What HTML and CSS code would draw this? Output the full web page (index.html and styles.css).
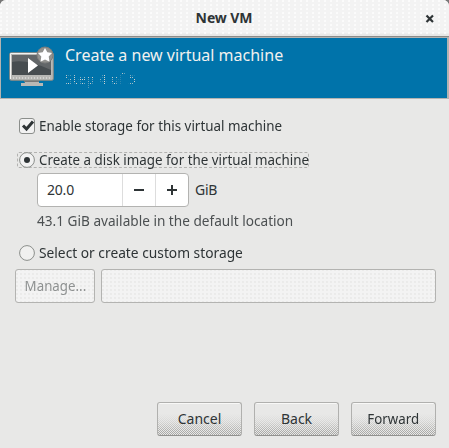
FILE: index.html
```html
<!DOCTYPE html>
<html lang="en">
<head>
<meta charset="utf-8">
<title>New VM</title>
<link rel="stylesheet" href="styles.css">
</head>
<body>
<div class="window">
  <header class="titlebar">
    <h1 class="title">New VM</h1>
    <svg class="close" width="10" height="10" viewBox="0 0 10 10"><path d="M1.500 1.500l6.500 6.500M8 1.500l-6.500 6.500" stroke="#2e3436" stroke-width="2.200"/></svg>
  </header>
  <section class="banner">
    <svg class="monitor" width="46" height="42" viewBox="0 0 46 42">
      <path d="M15 34h15v3h4v3H12v-3h4z" fill="#b8b8b5"/>
      <path d="M15 34h15v2H15z" fill="#777"/>
      <rect x=".7" y="6.700" width="43.600" height="27.600" rx="1.500" fill="#b8b8b5" stroke="#888a85"/>
      <path d="M1.500 33V7.500H34" fill="none" stroke="#f3f3f1"/>
      <rect x="3" y="9" width="39" height="20" fill="#474d50"/>
      <path d="M3 16Q18 13 42 24V9H3z" fill="#626668"/>
      <path d="M4 32h38" stroke="#eeeeec" stroke-dasharray="1 2"/>
      <path d="M19 12l10 7.500L19 27z" fill="#fff"/>
      <circle cx="36" cy="9" r="8" fill="#92928f" stroke="#7d7e7c"/>
      <path d="M36 2l2.300 4.300 4.700.7-3.300 3.500.8 5.200L36 13.500l-4.500 2.200.8-5.200L29 7l4.700-.7z" fill="#fff"/>
    </svg>
    <div class="heading">
      <div class="task">Create a new virtual machine</div>
      <div class="step">Step 4 of 5</div>
    </div>
  </section>
  <main class="content">
    <div class="option enable">
      <svg class="mark" width="16" height="16" viewBox="0 0 16 16"><rect x=".5" y=".5" width="15" height="15" rx="2.500" fill="#f2f2f2" stroke="#8b8e8b"/><path d="M4 7.500l3.500 3.500L14 3.500" fill="none" stroke="#2e3436" stroke-width="3"/></svg>
      <span class="enable-text">Enable storage for this virtual machine</span>
    </div>
    <div class="option create">
      <svg class="mark" width="16" height="16" viewBox="0 0 16 16"><circle cx="8" cy="8" r="7.400" fill="#f2f2f2" stroke="#8b8e8b"/><circle cx="8" cy="8" r="3" fill="#2e3436"/></svg>
      <span class="create-text">Create a disk image for the virtual machine</span>
    </div>
    <div class="size">
      <div class="spinner">
        <span class="value">20.0</span>
        <span class="spin"><svg width="12" height="12"><path d="M1 6h10" stroke="#2e3436" stroke-width="2"/></svg></span>
        <span class="spin"><svg width="12" height="12"><path d="M1 6h10M6 1v10" stroke="#2e3436" stroke-width="2"/></svg></span>
      </div>
      <span class="unit">GiB</span>
    </div>
    <div class="available"><span class="available-text">43.1 GiB available in the default location</span></div>
    <div class="option select">
      <svg class="mark" width="16" height="16" viewBox="0 0 16 16"><circle cx="8" cy="8" r="7.400" fill="#f0f0ef" stroke="#8b8e8b"/></svg>
      <span class="select-text">Select or create custom storage</span>
    </div>
    <div class="custom">
      <div class="manage"><span class="manage-text">Manage...</span></div>
      <div class="path"></div>
    </div>
  </main>
  <footer class="actions">
    <div class="button"><span>Cancel</span></div>
    <div class="button"><span>Back</span></div>
    <div class="button"><span class="forward">Forward</span></div>
  </footer>
</div>
</body>
</html>
```

FILE: styles.css
```css
* { box-sizing: border-box; }
body { margin: 0; background: #777; color: #2e3436; font: 14px/20px "Noto Sans", "Open Sans", sans-serif; white-space: nowrap; }
svg { display: block; flex: none; }
.window { width: 449px; height: 448px; display: flex; flex-direction: column; background: #e8e8e7; border-radius: 6px 6px 0 0; overflow: hidden; }
.titlebar { height: 37px; flex: none; display: grid; grid-template-columns: 1fr auto; align-items: center; padding: 0 14px 0 0; border-bottom: 1px solid #8b8b89;
  background: radial-gradient(circle at 1px 1px, #fff 0.6px, transparent 0.9px) 0 4px / 6px 4px, linear-gradient(#f3f3f3 33px, #e8e8e7 34px); }
.title { margin: 0 0 0 23px; text-align: center; font-size: 14px; line-height: 20px; font-weight: 700; letter-spacing: -.1px; }
.close { margin-top: 1px; }
.banner { height: 62px; flex: none; display: flex; background: #0073aa; border: solid #b3b3b1; border-width: 1px 2px 1px 1px; padding: 6px 0 0 8px; }
.monitor { margin-top: 2px; }
.heading { margin-left: 10px; }
.task { font-size: 16px; line-height: 22px; color: #f1f1ef; }
.step { width: max-content; margin-top: 3px; font-size: 14px; line-height: 20px; letter-spacing: .15px; color: transparent; background: conic-gradient(#d0d3d0 25%, #0073aa 0) 0 0 / 2px 2px; background-clip: text; -webkit-background-clip: text; }
.content { flex: 1; padding: 17px 13px 0 15px; }
.option { display: flex; align-items: center; gap: 4px; height: 20px; padding-left: 4px; }
.option span, .available span, .manage span, .forward { display: inline-block; transform-origin: left; }
.enable-text { transform: scaleX(.957); }
.create-text { transform: scaleX(.955); }
.available-text { transform: scaleX(.973); }
.select-text { transform: scaleX(.983); }
.manage .manage-text { transform-origin: center; transform: scaleX(.95); }
.actions .forward { transform-origin: center; transform: scaleX(.95); }
.create { width: 292px; height: 16px; margin: 16px 0 0 2px; padding-left: 1px; border: 1px dashed #b3b3b1; border-radius: 2px; }
.size { display: flex; align-items: center; margin: 5px 0 0 22px; }
.spinner { display: flex; width: 152px; height: 34px; background: #fff; border: 1px solid #b3b3b1; border-radius: 4px; line-height: 32px; }
.value { flex: 1; padding-left: 9px; letter-spacing: -.2px; }
.spin { width: 33px; display: grid; place-items: center; border-left: 1px solid #ddd; }
.unit { margin-left: 6px; letter-spacing: -.3px; }
.available { margin: 4px 0 0 22px; height: 20px; color: #4c5052; }
.select { margin-top: 12px; }
.custom { display: flex; gap: 6px; margin-top: 6px; }
.manage, .path { height: 34px; border: 1px solid #b3b3b1; border-radius: 3px; background: radial-gradient(circle at 1px 1px, #e6e6e5 .6px, transparent .9px) 0 3px / 4px 4px #f3f3f3; }
.manage { width: 80px; text-align: center; line-height: 32px; color: #8e9191; }
.path { flex: 1; }
.actions { display: flex; justify-content: flex-end; gap: 12px; height: 46px; padding-right: 13px; }
.button { width: 85px; height: 34px; text-align: center; line-height: 32px; border: 1px solid #b0b0ae; border-bottom-color: #929290; border-radius: 3px;
  background: linear-gradient(#f8f8f7, #f8f8f7) 0 0 / 100% 1px no-repeat, linear-gradient(#e8e8e7 11px, rgba(232,232,231,.7) 19px, transparent 29px), conic-gradient(#a9a9a7 25%, #e8e8e7 0 50%, #a9a9a7 0 75%, #e8e8e7 0) 0 0 / 2px 2px; }
```
